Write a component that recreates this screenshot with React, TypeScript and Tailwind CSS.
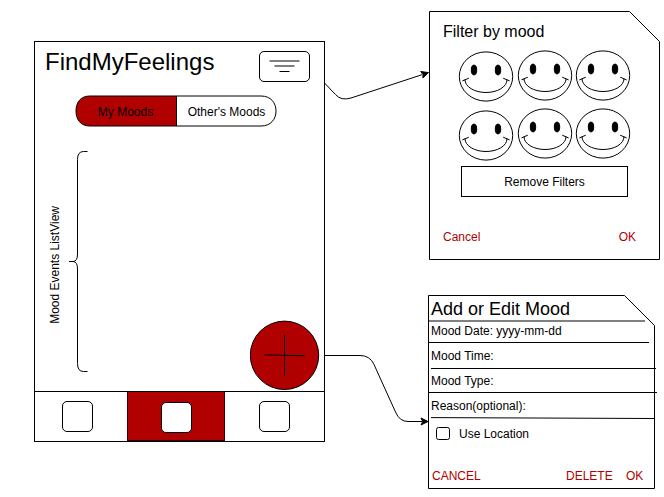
import React from "react";

function Smiley({ className = "" }: { className?: string }) {
  return (
    <svg width="56" height="51" viewBox="-28 -25.5 56 51" fill="none" stroke="#000" className={`block ${className}`}>
      <ellipse rx="26.7" ry="24.6" />
      <ellipse cx="-12" cy="-6.5" rx="2.7" ry="4.9" fill="#000" />
      <ellipse cx="12" cy="-6.5" rx="2.7" ry="4.9" fill="#000" />
      <path d="M-21 3.2A21 12.8 0 0 0 21 3.2M-23.6 4.4L-17.2 1.7M23.6 4.4L17.2 1.7" />
    </svg>
  );
}

function CutCornerFrame({ width, height }: { width: number; height: number }) {
  const r = width - 0.5;
  const b = height - 0.5;
  return (
    <svg width={width} height={height} className="absolute left-0 top-0 -z-10" fill="#fff" stroke="#000">
      <path d={`M0.5 0.5H${r - 30}L${r} 30.5V${b}H0.5Z`} />
    </svg>
  );
}

function Phone() {
  return (
    <section className="absolute left-[34px] top-[41px] flex h-[401px] w-[291px] flex-col border border-black">
      <header className="flex h-[53px] justify-between pl-[10px] pr-[14px]">
        <h1 className="pt-[6px] text-2xl leading-[28px]">FindMyFeelings</h1>
        <button className="mt-[9px] h-[31px] w-[51px] rounded-[5px] border border-black">
          <svg width="49" height="29" viewBox="0 0 49 29" stroke="#000" className="block">
            <path d="M9.5 9H39.5M14.5 14H34.5" stroke="#808080" strokeWidth="2" />
            <path d="M19.5 19.5H29.5" />
          </svg>
        </button>
      </header>
      <div className="relative isolate ml-[40px] flex h-8 w-[202px]">
        <svg width="202" height="32" className="absolute left-0 top-0 -z-10" stroke="#000">
          <path d="M101 1H15C5 1 1 8 1 16S5 31 15 31H101" fill="#b00000" />
          <path d="M101 1H186C196 1 201 8 201 16S196 31 186 31H101" fill="#fff" />
          <path d="M101.5 1V31" />
        </svg>
        <button className="flex-1 pt-px text-center leading-[30px]">My Moods</button>
        <button className="flex-1 pt-px text-center leading-[30px]">Other's Moods</button>
      </div>
      <main className="relative flex h-[264px] pt-[24px]">
        <div className="ml-[13px] mr-[7px] flex h-[221px] w-[14px] items-center justify-center pt-[7px]">
          <span className="rotate-180 whitespace-nowrap leading-[14px] [writing-mode:vertical-rl]">Mood Events ListView</span>
        </div>
        <svg width="20" height="222" viewBox="69 151 20 222" fill="none" stroke="#000">
          <path d="M87.5 151.5H83.5Q77.5 151.5 77.5 159.5V254Q77.5 261.5 73 261.5H69M73 261.5Q77.5 261.5 77.5 269V363.5Q77.5 371.5 83.5 371.5H87.5" />
        </svg>
        <button className="absolute bottom-[1px] right-[4px]">
          <svg width="70" height="70" viewBox="0 0 70 70" stroke="#000" className="block">
            <circle cx="34.5" cy="35.3" r="34.2" fill="#b00000" />
            <path d="M34.5 15V56M14.5 34.9L54.5 35.7" />
          </svg>
        </button>
      </main>
      <nav className="grid h-[50px] grid-cols-[92px_98px_1fr] border-t border-black">
        <div className="pl-[27px] pt-[9px]">
          <div className="h-[31px] w-[31px] rounded-[5px] border border-black" />
        </div>
        <div className="border-x border-b border-[#300] bg-[#b00000] pl-[33px] pt-[10px]">
          <div className="h-[31px] w-[31px] rounded-[5px] border border-black bg-white" />
        </div>
        <div className="pl-[34px] pt-[9px]">
          <div className="h-[31px] w-[31px] rounded-[5px] border border-black" />
        </div>
      </nav>
    </section>
  );
}

function FilterDialog() {
  return (
    <section className="absolute left-[429px] top-[11px] isolate flex h-[249px] w-[231px] flex-col">
      <CutCornerFrame width={231} height={249} />
      <h2 className="pl-[14px] pt-[11px] text-base leading-5">Filter by mood</h2>
      <div className="ml-[29px] mt-[8px] grid grid-cols-[58.5px_58.5px_56px] grid-rows-[58px_58px]">
        <Smiley className="mt-px" />
        <Smiley />
        <Smiley />
        <Smiley className="mt-[2px]" />
        <Smiley />
        <Smiley />
      </div>
      <button className="ml-[32px] h-[31px] w-[167px] border border-black pt-px text-center leading-[29px]">
        Remove Filters
      </button>
      <div className="mt-[33px] flex justify-between pl-[14px] pr-[24px] leading-[14px] text-[#b00000]">
        <button>Cancel</button>
        <button>OK</button>
      </div>
    </section>
  );
}

function EditDialog() {
  return (
    <section className="absolute left-[428px] top-[295px] isolate flex h-[194px] w-[231px] flex-col">
      <CutCornerFrame width={227} height={194} />
      <h2 className="h-[25px] pl-[3px] pt-[4px] text-lg leading-5">Add or Edit Mood</h2>
      <div className="ml-px h-[2px] w-[216px] bg-[#808080]" />
      <div className="h-[20px] pl-[3px] pt-[2px] leading-[14px]">Mood Date: yyyy-mm-dd</div>
      <div className="h-px w-[221px] bg-black" />
      <div className="h-[25px] pl-[3px] pt-[6px] leading-[14px]">Mood Time:</div>
      <div className="ml-[3px] h-px w-[225px] bg-black" />
      <div className="h-[23px] pl-[3px] pt-[5px] leading-[14px]">Mood Type:</div>
      <div className="h-px w-[229px] bg-black" />
      <div className="h-[24px] pl-[3px] pt-[6px] leading-[14px]">Reason(optional):</div>
      <svg width="227" height="3" stroke="#000" className="block">
        <path d="M3 0.6L226.5 1.5" />
      </svg>
      <label className="mt-[7px] flex h-[14px] pl-[8px] leading-[14px]">
        <span className="mr-[9px] h-[13px] w-[14px] rounded-[2.5px] border border-black" />
        <span>Use Location</span>
      </label>
      <div className="mt-[28px] flex pl-[4px] leading-[14px] text-[#b00000]">
        <button className="w-[134px] text-left">CANCEL</button>
        <button className="w-[60px] text-left">DELETE</button>
        <button>OK</button>
      </div>
    </section>
  );
}

export default function App() {
  return (
    <div className="relative h-[497px] w-[664px] overflow-hidden bg-white font-['Liberation_Sans',Arial,sans-serif] text-xs text-black">
      <Phone />
      <FilterDialog />
      <EditDialog />
      <svg width="664" height="497" className="pointer-events-none absolute left-0 top-0" fill="none" stroke="#000">
        <path d="M324.5 83L335.5 94.5Q341 101 351 98L422 74.7" />
        <path d="M428.5 72.6L422.9 78L423 74.5L420.7 71.5Z" fill="#000" />
        <path d="M324.5 355.5H360Q370 355.5 374 364.5L395.5 412Q399.5 421.5 408 421.5H422" />
        <path d="M428 421.5L421 425L422.7 421.5L421 418Z" fill="#000" />
      </svg>
    </div>
  );
}
